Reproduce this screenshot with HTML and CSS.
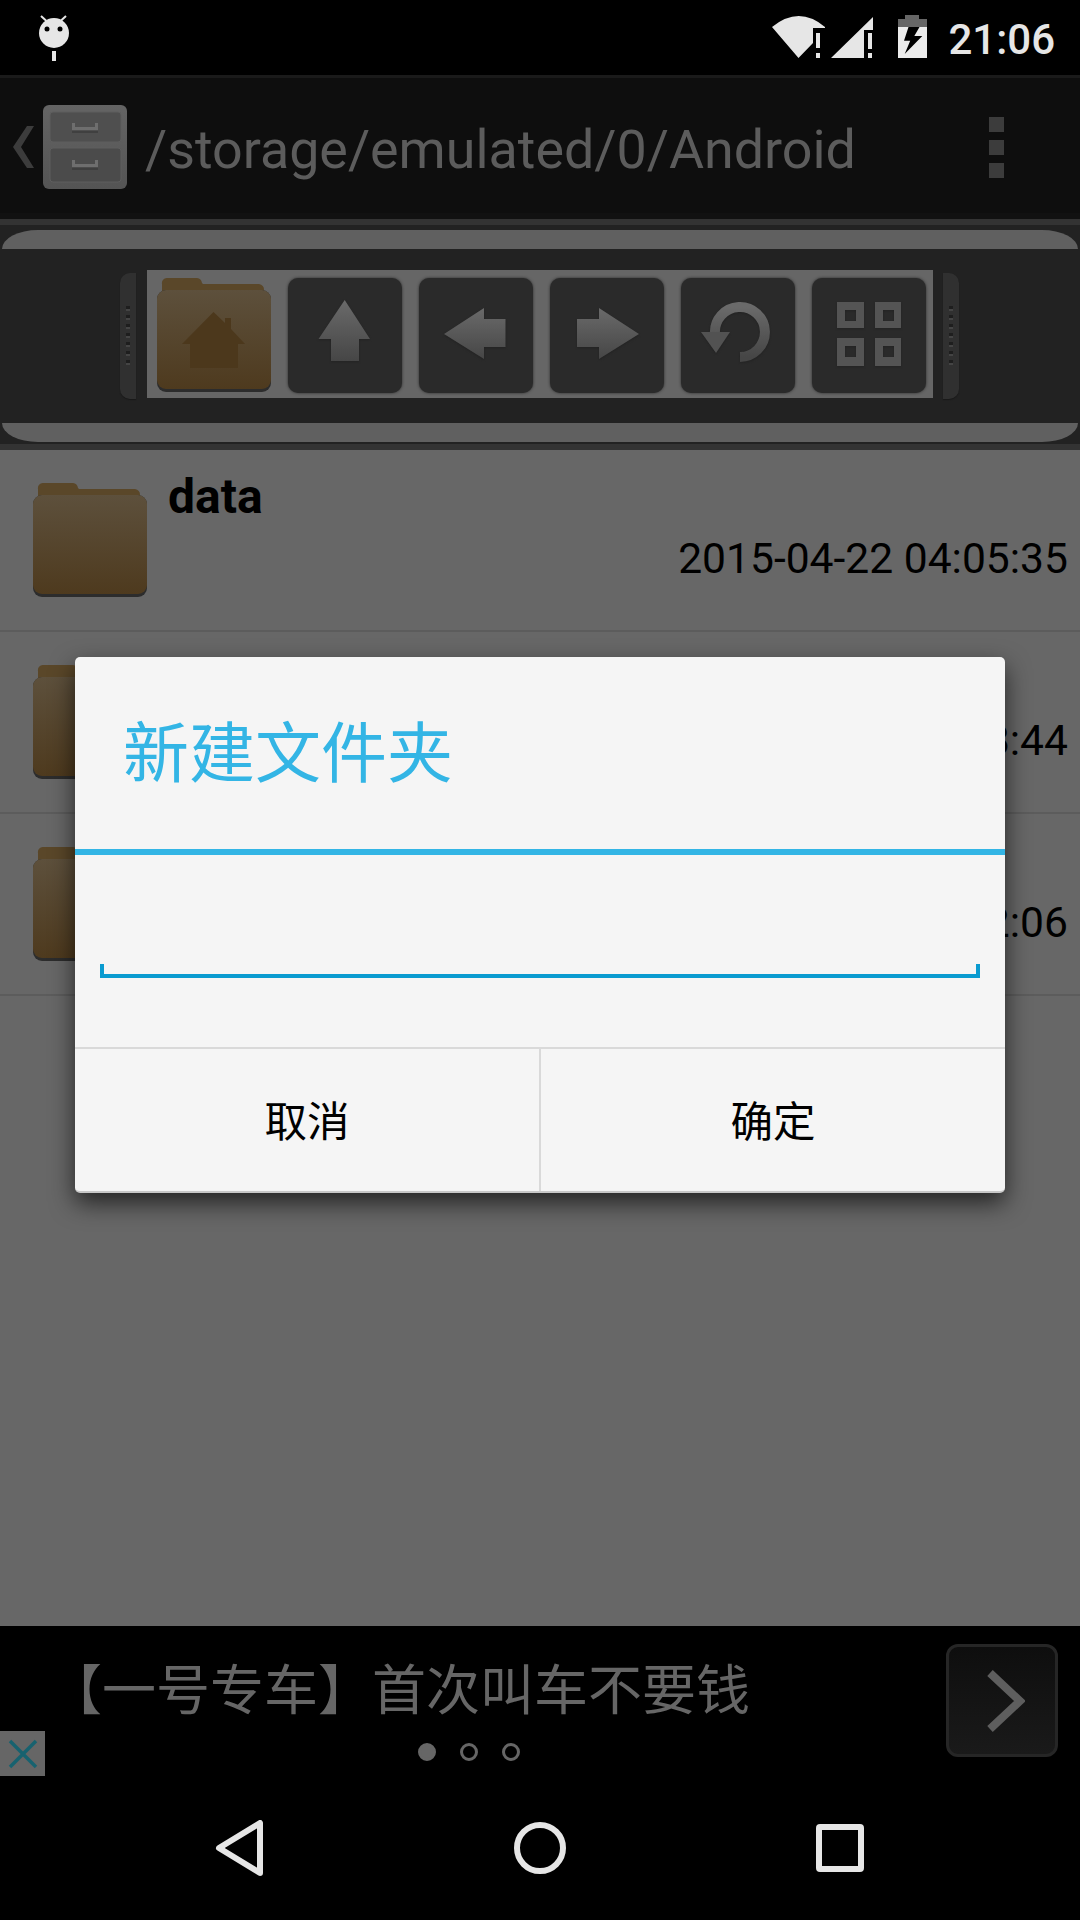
FILE: index.html
```html
<!DOCTYPE html>
<html lang="zh">
<head>
<meta charset="utf-8">
<title>新建文件夹</title>
<link rel="stylesheet" href="styles.css">
</head>
<body>
<svg class="defs" width="0" height="0" aria-hidden="true">
  <defs>
    <linearGradient id="fold" x1="0" y1="0" x2="0" y2="1"><stop offset="0" stop-color="#5d503c"/><stop offset="1" stop-color="#4e3a1e"/></linearGradient>
    <linearGradient id="glyph" x1="0" y1="0" x2="0" y2="1"><stop offset="0" stop-color="#6a6a6a"/><stop offset="1" stop-color="#464646"/></linearGradient>
    <linearGradient id="cab" x1="0" y1="0" x2="0" y2="1"><stop offset="0" stop-color="#646464"/><stop offset="1" stop-color="#545454"/></linearGradient>
    <symbol id="folder" viewBox="0 0 114 118">
      <path d="M5 6a5 5 0 0 1 5-6h30a6 6 0 0 1 5 5l1 1h56a6 6 0 0 1 5 6v6H5z" fill="#5a4729"/>
      <rect x="0" y="12" width="114" height="102" rx="9" fill="#2c2c2c"/>
      <rect x="0" y="12" width="114" height="99" rx="9" fill="url(#fold)"/>
    </symbol>
  </defs>
</svg>
<div class="screen">
  <header class="status">
    <svg class="android" width="32" height="46" viewBox="0 0 32 46">
      <path d="M3 1l5.500 5M28 1l-5.500 5" stroke="#e6e6e6" stroke-width="2" fill="none"/>
      <circle cx="16" cy="18" r="15" fill="#e6e6e6"/>
      <circle cx="9" cy="14" r="2.500" fill="#000"/>
      <circle cx="22" cy="14" r="2.500" fill="#000"/>
      <rect x="14" y="36" width="4" height="10" fill="#e6e6e6"/>
    </svg>
    <div class="status-right">
      <svg class="wifi" width="55" height="42" viewBox="0 0 55 42">
        <path d="M0 11Q27 -11 53 11L53 12L41 12L41 27L26.500 42Z" fill="#e6e6e6"/>
        <path d="M44 17h4v15h-4zM44 37h4v5h-4z" fill="#e6e6e6"/>
      </svg>
      <svg class="signal" width="42" height="41" viewBox="0 0 42 41">
        <path d="M0 41L42 0V13H33V41Z" fill="#e6e6e6"/>
        <path d="M37 16h4v16h-4zM37 36h4v5h-4z" fill="#e6e6e6"/>
      </svg>
      <svg class="battery" width="29" height="43" viewBox="0 0 29 43">
        <path d="M7 0h14v4h8v9H0V4h7z" fill="#666"/>
        <rect x="0" y="12" width="29" height="31" fill="#ececec"/>
        <path d="M10.500 12L21.500 12L16.300 21L24.300 21L6.700 39L12.200 25.700L6 25.700Z" fill="#000"/>
      </svg>
      <span class="clock">21:06</span>
    </div>
  </header>

  <section class="path-bar">
    <svg class="back" width="21" height="42" viewBox="0 0 21 42"><path d="M21 0L8 21L21 42H14L0 21L14 0Z" fill="#3c3c3c"/></svg>
    <svg class="cabinet" width="84" height="84" viewBox="0 0 84 84">
      <rect width="84" height="84" rx="6" fill="url(#cab)"/>
      <rect x="7" y="7" width="71" height="30" rx="3" fill="#4f4f4f" stroke="#5e5e5e" stroke-width="1"/>
      <rect x="7" y="43" width="71" height="34" rx="3" fill="#4b4b4b" stroke="#5e5e5e" stroke-width="1"/>
      <path d="M29 18h3v4h20v-4h3v7H29z" fill="#6e6e6e"/>
      <path d="M29 26h26v2H29z" fill="#404040"/>
      <path d="M29 55h3v4h20v-4h3v7H29z" fill="#6e6e6e"/>
      <path d="M29 63h26v2H29z" fill="#3e3e3e"/>
    </svg>
    <span class="path-text">/storage/emulated/0/Android</span>
    <div class="menu"><i></i><i></i><i></i></div>
  </section>

  <section class="toolbar">
    <div class="band band-top"></div>
    <div class="tool-row">
      <div class="handle"><i></i></div>
      <div class="tools">
        <svg class="tool-home" width="114" height="118" viewBox="0 0 114 118">
          <use href="#folder"/>
          <path d="M56.500 34L68 45V40H74V51L88 66H81V90H33V66H25Z" fill="#4c381c"/>
        </svg>
        <div class="tool"><svg width="114" height="115" viewBox="0 0 114 115"><path d="M56.700 22L82 61H71V83H43V61H30.500Z" fill="url(#glyph)"/></svg></div>
        <div class="tool"><svg width="114" height="115" viewBox="0 0 114 115"><path d="M25 56L65 30V41H86.500V69H65V81Z" fill="url(#glyph)"/></svg></div>
        <div class="tool"><svg width="114" height="115" viewBox="0 0 114 115"><path d="M89 56L49 30V41H27V69H49V81Z" fill="url(#glyph)"/></svg></div>
        <div class="tool"><svg width="114" height="115" viewBox="0 0 114 115">
          <path d="M59 79A25 25 0 1 0 34 56" fill="none" stroke="url(#glyph)" stroke-width="10"/>
          <path d="M20 54H49L35 75Z" fill="#525252"/>
        </svg></div>
        <div class="tool"><svg width="114" height="115" viewBox="0 0 114 115">
          <path fill-rule="evenodd" d="M25 24h27v26H25zM33 32v11h11V32zM63 24h26v26H63zM71 32v11h11V32zM25 60h27v28H25zM33 68v11h11V68zM63 60h26v28H63zM71 68v11h11V68z" fill="#545454"/>
        </svg></div>
      </div>
      <div class="handle handle-right"><i></i></div>
    </div>
    <div class="band band-bottom"></div>
  </section>

  <main class="list">
    <div class="row">
      <svg class="row-icon" width="114" height="118"><use href="#folder"/></svg>
      <div class="row-body"><div class="name">data</div><div class="date">2015-04-22 04:05:35</div></div>
    </div>
    <div class="row">
      <svg class="row-icon" width="114" height="118"><use href="#folder"/></svg>
      <div class="row-body"><div class="name">&nbsp;</div><div class="date">2015-04-22 04:08:44</div></div>
    </div>
    <div class="row">
      <svg class="row-icon" width="114" height="118"><use href="#folder"/></svg>
      <div class="row-body"><div class="name">&nbsp;</div><div class="date">2015-04-22 04:02:06</div></div>
    </div>
  </main>

  <section class="ad">
    <div class="ad-main">
      <div class="ad-text">【一号专车】首次叫车不要钱</div>
      <div class="dots"><i class="on"></i><i></i><i></i></div>
    </div>
    <div class="ad-next">
      <svg width="38" height="62" viewBox="0 0 38 62"><path d="M3 3L33 31L3 59" fill="none" stroke="#5e5e5e" stroke-width="8"/></svg>
    </div>
    <div class="ad-close">
      <svg width="30" height="30" viewBox="0 0 30 30"><path d="M2 2L28 28M28 2L2 28" stroke="#17626f" stroke-width="3.500"/></svg>
    </div>
  </section>

  <nav class="nav">
    <svg width="48" height="56" viewBox="0 0 48 56"><path d="M4 28L45 3V53Z" fill="none" stroke="#e6e6e6" stroke-width="6" stroke-linejoin="round"/></svg>
    <svg width="52" height="52" viewBox="0 0 52 52"><circle cx="26" cy="26" r="23" fill="none" stroke="#e6e6e6" stroke-width="6"/></svg>
    <svg width="48" height="48" viewBox="0 0 48 48"><rect x="3" y="3" width="42" height="42" rx="1" fill="none" stroke="#e6e6e6" stroke-width="6"/></svg>
  </nav>

  <div class="dialog">
    <h1 class="dialog-title">新建文件夹</h1>
    <div class="dialog-field"><div class="input-line"></div></div>
    <div class="dialog-actions">
      <div class="action">取消</div>
      <div class="action">确定</div>
    </div>
  </div>
</div>
</body>
</html>
```
FILE: styles.css
```css
* { box-sizing: border-box; }
html, body { margin: 0; padding: 0; background: #000; }
.defs { position: absolute; }
.screen {
  position: relative;
  width: 1080px;
  height: 1920px;
  overflow: hidden;
  display: flex;
  flex-direction: column;
  font-family: Roboto, "Noto Sans CJK SC", sans-serif;
}

/* status bar */
.status {
  height: 75px;
  flex: none;
  background: #000;
  display: flex;
  justify-content: space-between;
  padding: 15px 25px 0 38px;
}
.status-right { display: flex; align-items: flex-start; }
.wifi { margin-top: 1px; }
.signal { margin: 2px 0 0 4px; }
.battery { margin-left: 25px; }
.clock {
  margin-left: 21px;
  font-size: 42px;
  font-weight: 500;
  line-height: 49px;
  color: #e6e6e6;
}

/* path bar */
.path-bar {
  height: 144px;
  flex: none;
  background: #0e0e0e;
  border-top: 3px solid #1a1a1a;
  border-bottom: 6px solid #111;
  display: flex;
  align-items: center;
  padding: 3px 0 0 13px;
}
.cabinet { margin-left: 9px; }
.path-text {
  margin-left: 18px;
  padding-top: 5px;
  font-size: 53.800px;
  line-height: 64px;
  color: #5c5c5c;
  flex: 1;
}
.menu {
  width: 15px;
  margin-right: 76px;
  display: flex;
  flex-direction: column;
  gap: 8px;
}
.menu i { display: block; height: 15px; background: #3c3c3c; }

/* toolbar */
.toolbar {
  flex: none;
  height: 231px;
  background: #222;
  border-top: 6px solid #333;
  border-bottom: 6px solid #333;
  padding-top: 5px;
}
.band { height: 19px; margin: 0 2px; background: #606060; }
.band-top { border-radius: 36px 36px 0 0 / 19px 19px 0 0; }
.band-bottom { border-radius: 0 0 36px 36px / 0 0 19px 19px; }
.tool-row {
  height: 174px;
  display: flex;
  align-items: flex-start;
  padding-left: 120px;
}
.handle {
  width: 16px;
  height: 126px;
  margin-top: 24px;
  background: #303030;
  border-radius: 10px 0 0 10px;
  box-shadow: 0 1px 1px #191919;
  display: flex;
  justify-content: center;
  align-items: center;
}
.handle i {
  display: block;
  width: 4px;
  height: 60px;
  background: repeating-linear-gradient(180deg, #1e1e1e 0 3px, #444 3px 5px, transparent 5px 9px);
}
.handle-right { border-radius: 0 10px 10px 0; }
.tools {
  width: 786px;
  height: 128px;
  margin: 21px 10px 0 11px;
  background: #666;
  display: flex;
  gap: 17px;
  padding: 8px 0 0 10px;
}
.tool {
  width: 114px;
  height: 115px;
  background: #2a2a2a;
  border-radius: 10px;
  box-shadow: 0 0 3px #2a2a2a;
}
.tool svg { display: block; filter: drop-shadow(0 1px 1px #222); }

/* list */
.list {
  flex: 1;
  background: #676767;
}
.row {
  height: 182px;
  border-bottom: 2px solid #5c5c5c;
  display: flex;
  padding: 33px 12px 0 33px;
}
.row-icon { flex: none; }
.row-body { flex: 1; margin-left: 21px; }
.name {
  font-size: 48px;
  font-weight: 700;
  line-height: 54px;
  margin-top: -13px;
  color: #000;
}
.date {
  text-align: right;
  font-size: 42.600px;
  line-height: 50px;
  margin-top: 9px;
  color: #000;
}

/* ad */
.ad {
  position: relative;
  flex: none;
  height: 150px;
  background: #000;
  display: flex;
  padding: 18px 22px 0 48px;
}
.ad-main { flex: 1; padding-right: 56px; }
.ad-text {
  font-size: 54px;
  line-height: 62px;
  margin-top: 17px;
  color: #666;
  white-space: nowrap;
}
.dots {
  display: flex;
  justify-content: center;
  gap: 24px;
  margin-top: 20px;
}
.dots i {
  width: 18px;
  height: 18px;
  border-radius: 50%;
  border: 3px solid #666;
}
.dots i.on { background: #666; }
.ad-next {
  flex: none;
  width: 112px;
  height: 113px;
  border: 3px solid #262626;
  border-radius: 12px;
  background: linear-gradient(#0e0e0e, #1a1a1a);
  display: flex;
  align-items: center;
  justify-content: center;
  padding-left: 8px;
}
.ad-close {
  position: absolute;
  left: 0;
  bottom: 0;
  width: 45px;
  height: 45px;
  background: #666;
  display: flex;
  align-items: center;
  justify-content: center;
}

/* nav */
.nav {
  flex: none;
  height: 144px;
  background: #000;
  display: flex;
  align-items: center;
  padding: 0 216px 0 215px;
  justify-content: space-between;
}

/* dialog */
.dialog {
  position: absolute;
  left: 75px;
  top: 657px;
  width: 930px;
  height: 536px;
  background: #f5f5f5;
  border-radius: 5px;
  border-bottom: 2px solid #c8c8c8;
  box-shadow: 0 10px 24px rgba(0, 0, 0, .65);
  display: flex;
  flex-direction: column;
}
.dialog-title {
  height: 198px;
  margin: 0;
  padding: 0 0 0 48px;
  border-bottom: 6px solid #33b5e5;
  font-size: 66px;
  font-weight: 400;
  line-height: 195px;
  color: #33b5e5;
}
.dialog-field {
  height: 192px;
  padding: 109px 25px 0;
}
.input-line {
  height: 14px;
  border: 4px solid #0a9bd0;
  border-top: 0;
}
.dialog-actions {
  flex: 1;
  display: flex;
  border-top: 2px solid #d9d9d9;
}
.action {
  flex: 1;
  display: flex;
  align-items: center;
  justify-content: center;
  font-size: 42.500px;
  color: #000;
  padding-bottom: 3px;
}
.action + .action { border-left: 2px solid #d9d9d9; }
```
